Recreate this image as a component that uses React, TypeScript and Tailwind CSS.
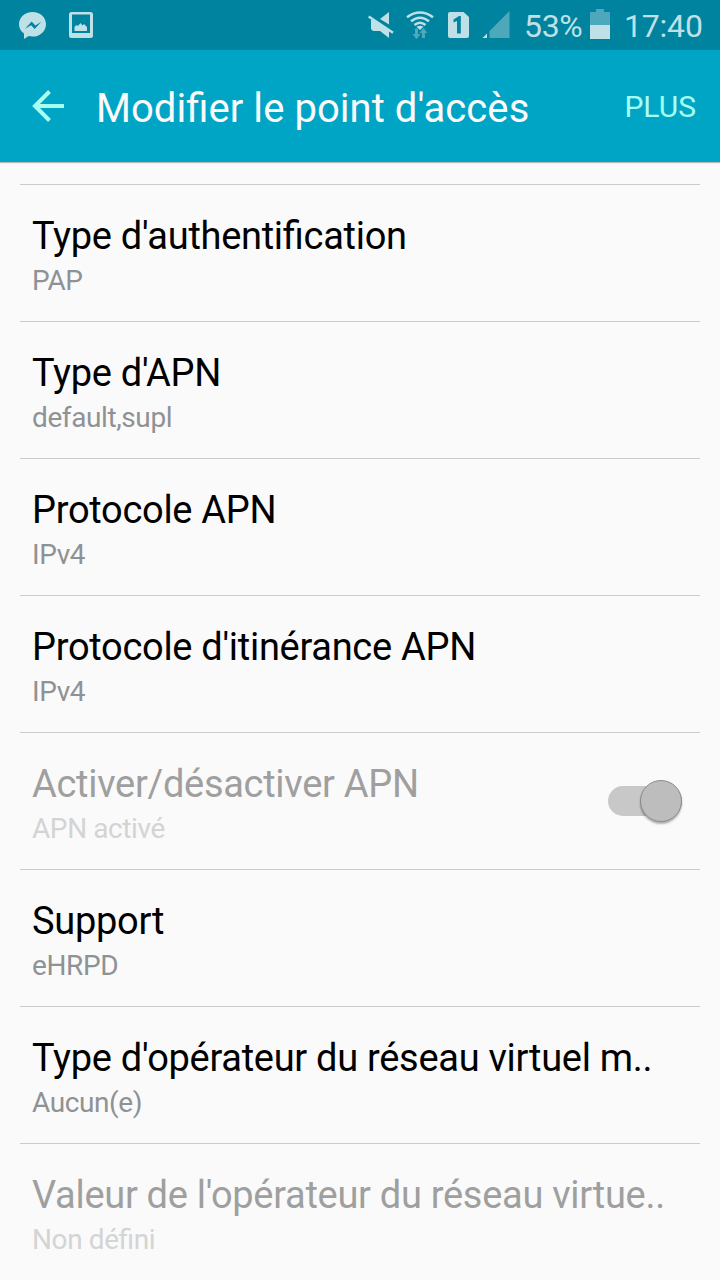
import { useState } from "react"
import clsx from "clsx"

interface Setting {
  title: string
  value: string
  disabled?: boolean
  toggle?: boolean
}

const settings: Setting[] = [
  { title: "Type d'authentification", value: "PAP" },
  { title: "Type d'APN", value: "default,supl" },
  { title: "Protocole APN", value: "IPv4" },
  { title: "Protocole d'itinérance APN", value: "IPv4" },
  { title: "Activer/désactiver APN", value: "APN activé", disabled: true, toggle: true },
  { title: "Support", value: "eHRPD" },
  { title: "Type d'opérateur du réseau virtuel m..", value: "Aucun(e)" },
  { title: "Valeur de l'opérateur du réseau virtue..", value: "Non défini", disabled: true },
]

function StatusBar() {
  return (
    <div className="flex h-[50px] items-center bg-[#00839e] text-[#bfe0e7]">
      <svg className="ml-[19px] h-[50px] w-[28px]" viewBox="0 0 28 50" fill="currentColor">
        <path d="M13.600 12C6 12 0 17.300 0 24.200c0 3.900 1.900 7.200 5 9.400V39l4.700-2.900c1.200.3 2.500.5 3.900.5 7.500 0 13.400-5.500 13.400-12.400S21.100 12 13.600 12z" />
        <path d="M6 28.800l6.700-7.200 3.600 3.800 6-3.700-6.600 7.200-3.700-3.700z" fill="#00839e" />
      </svg>
      <svg className="ml-[22px] h-[50px] w-[24px]" viewBox="0 0 24 50" fill="currentColor">
        <path
          fillRule="evenodd"
          d="M2.500 12h19a2.500 2.500 0 0 1 2.500 2.500v21a2.500 2.500 0 0 1-2.500 2.500h-19A2.500 2.500 0 0 1 0 35.500v-21A2.500 2.500 0 0 1 2.500 12zM3 14.500V33h18V14.500z"
        />
        <path d="M5.500 31v-4l2-2 1.500 1 2.500-3 2 2.500 1.500-1.500 3 3v4z" />
      </svg>

      <div className="ml-auto flex h-full items-center">
        <svg className="h-[50px] w-[26px]" viewBox="0 0 26 50" fill="currentColor">
          <path d="M21 12v12.500L12 19z" />
          <path d="M3 20h4l14 9.500V38l-9-7H5l-2-2z" />
          <path d="M.7 16.500L25 32.700" fill="none" stroke="currentColor" strokeWidth="2.400" />
        </svg>
        <svg className="ml-[12px] h-[50px] w-[28px]" viewBox="0 0 28 50" fill="none">
          <g stroke="currentColor" strokeWidth="2.500">
            <path d="M1 17.200q13-9.500 26 0" />
            <path d="M5 21.300q9-7 18 0" />
            <path d="M8.500 25q5.500-4.500 11 0" />
          </g>
          <path d="M10.500 26.800q3.500-2.300 7 0L14 30z" fill="currentColor" />
          <path
            d="M9 28.500h3V34h2.500l-4 5.200-4-5.200H9zM17.500 28l4 5H19v5h-3v-5h-2.500z"
            fill="#4da8bb"
          />
        </svg>
        <svg className="ml-[14px] h-[50px] w-[22px]" viewBox="0 0 22 50">
          <path
            d="M2 12h13.500l5.500 5v19a2 2 0 0 1-2 2H2a2 2 0 0 1-2-2V14a2 2 0 0 1 2-2z"
            fill="currentColor"
          />
          <path d="M5.500 19.500L11 16h1.800v17.500H9V21l-3.500 1.500z" fill="#00839e" />
        </svg>
        <svg className="ml-[12px] h-[50px] w-[28px]" viewBox="0 0 28 50">
          <path d="M5 38V33.500L.5 38z" fill="currentColor" />
          <path d="M27.500 11v27H7.500v-7z" fill="#4da8bb" />
        </svg>
        <span className="ml-[14px] w-[66px] pt-[2px] text-[32px] leading-[38px] tracking-[-0.3px] whitespace-nowrap">
          53%
        </span>
        <svg className="h-[50px] w-[20px]" viewBox="0 0 20 50">
          <path d="M0 12h6V9h8v3h6v13H0z" fill="#4da8bb" />
          <path d="M0 25h20v14H0z" fill="currentColor" />
        </svg>
        <span className="ml-[14px] w-[96px] pt-[2px] text-[32px] leading-[38px] tracking-[-0.2px] whitespace-nowrap">
          17:40
        </span>
      </div>
    </div>
  )
}

function Toggle({ on }: { on: boolean }) {
  return (
    <span className={clsx("flex h-[30px] w-[74px] items-center rounded-full bg-[#c8c8c8]", on && "justify-end")}>
      <span className="h-[42px] w-[42px] shrink-0 rounded-full border border-[#8c8c8c] bg-[#bdbdbd] shadow-[0_2px_2px_rgba(0,0,0,0.3)]" />
    </span>
  )
}

export default function App() {
  const [apnEnabled] = useState(true)

  return (
    <div className="flex h-[1280px] w-[720px] flex-col overflow-hidden bg-[#fafafa] font-['Roboto',sans-serif] [font-feature-settings:'liga']">
      <StatusBar />

      <header className="flex h-[112px] shrink-0 items-center bg-[#00a5c6] pr-[24px] pl-[32px] shadow-[0_1px_1px_rgba(0,0,0,0.25)]">
        <button aria-label="Retour">
          <svg className="h-[32px] w-[32px]" viewBox="0 0 32 32" fill="none" stroke="#a7fff2" strokeWidth="4">
            <path d="M32 16H3M17.500 1.500L3 16l14.500 14.500" />
          </svg>
        </button>
        <h1 className="ml-[32px] pt-[6px] text-[40px] leading-[46px] tracking-[0.06px] whitespace-nowrap text-[#fafafa]">
          Modifier le point d'accès
        </h1>
        <button className="ml-auto pt-[2px] text-[30px] leading-[36px] text-[#a7fff2]">PLUS</button>
      </header>

      <ul className="mx-[20px] mt-[22px]">
        {settings.map((s) => (
          <li
            key={s.title}
            className="flex h-[137px] items-center justify-between border-t border-[#cccccc] pr-[18px] pl-[12px]"
          >
            <div className="pt-[4px] whitespace-nowrap">
              <h2
                className={clsx(
                  "text-[38px] leading-[44px] tracking-[-0.29px]",
                  s.disabled ? "text-[#9f9f9f]" : "text-black",
                )}
              >
                {s.title}
              </h2>
              <p
                className={clsx(
                  "mt-[6px] text-[28px] leading-[33px] tracking-[-0.4px]",
                  s.disabled ? "text-[#d3d4d4]" : "text-[#8f9294]",
                )}
              >
                {s.value}
              </p>
            </div>
            {s.toggle && <Toggle on={apnEnabled} />}
          </li>
        ))}
      </ul>
    </div>
  )
}
